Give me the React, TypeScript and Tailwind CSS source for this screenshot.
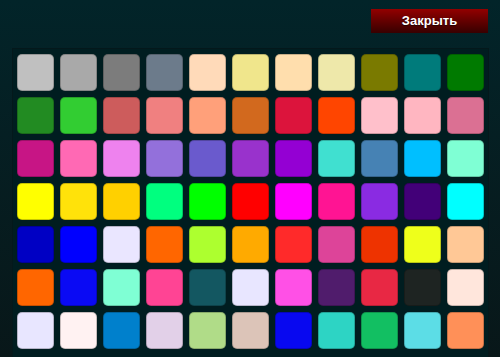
import React from "react";

const colors: string[] = [
  "#C0C0C0", "#A9A9A9", "#7C7C7C", "#6C7B8B", "#FFDAB9", "#F0E68C", "#FFDEAD", "#EEE8AA", "#7A7A00", "#007B7B", "#007A00",
  "#228B22", "#32CD32", "#CD5C5C", "#F08080", "#FFA07A", "#D2691E", "#DC143C", "#FF4500", "#FFC0CB", "#FFB6C1", "#DB7093",
  "#C71585", "#FF69B4", "#EE82EE", "#9370DB", "#6A5ACD", "#9932CC", "#9400D3", "#40E0D0", "#4682B4", "#00BFFF", "#7FFFD4",
  "#FFFF00", "#FFE20A", "#FFD000", "#00FF7F", "#00FF00", "#FF0000", "#FF00FF", "#FF1493", "#8A2BE2", "#420078", "#00FFFF",
  "#0000C4", "#0000FF", "#EAE6FF", "#FF6600", "#ADFF2F", "#FFAA00", "#FF2A2A", "#DD4499", "#EE3300", "#EEFF1B", "#FFC896",
  "#FF6600", "#0A0AF4", "#7FFFD4", "#FF4494", "#135761", "#E8E6FF", "#FF50E6", "#501C6C", "#E82844", "#1E2422", "#FFE6DC",
  "#E8E6FF", "#FFF2F2", "#0080CC", "#E2D0E8", "#B0DC88", "#DCC4B8", "#0808F0", "#2DD4C4", "#12BF62", "#5CDDE6", "#FF9058",
];

export default function App() {
  return (
    <div
      className="h-[357px] w-[500px] overflow-hidden bg-gradient-to-b from-[#022429] to-[#081719]"
      style={{ fontFamily: '"Liberation Sans", Arial, sans-serif' }}
    >
      <div className="flex justify-end pt-[9px] pr-[12px]">
        <button className="h-[24px] w-[117px] bg-gradient-to-b from-[#930000] to-[#380000] text-[13px] font-bold text-white [text-shadow:0_1px_1px_rgba(0,0,0,0.6)]">
          Закрыть
        </button>
      </div>
      <div className="ml-[12px] mt-[15px] w-[477px] h-[320px] border border-[#04181b] bg-[#001d20] pl-[4px] pt-[5px]">
        <div className="grid grid-cols-[repeat(11,37px)] gap-[6px]">
          {colors.map((c, i) => (
            <div
              key={i}
              className="h-[37px] w-[37px] rounded-[5px] border border-[rgba(0,0,0,0.22)]"
              style={{ backgroundColor: c }}
            />
          ))}
        </div>
      </div>
    </div>
  );
}
